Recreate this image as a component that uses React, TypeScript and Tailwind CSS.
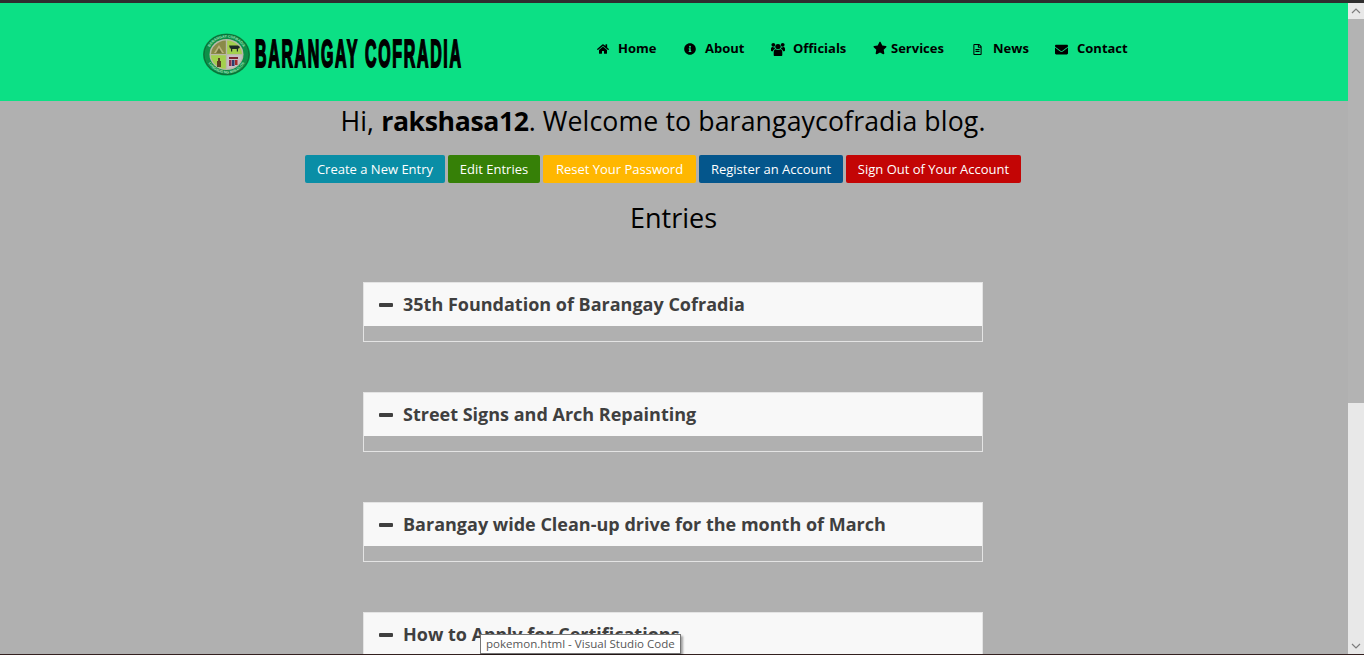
import React from "react";
import { FaHome, FaInfoCircle, FaStar, FaRegFileAlt, FaEnvelope } from "react-icons/fa";

function UsersIcon({ size }: { size: number }) {
  return (
    <svg width={size} height={size} viewBox="0 0 14 14" fill="currentColor" className="shrink-0">
      <circle cx="7" cy="4.6" r="2.7" />
      <circle cx="2.3" cy="2.8" r="1.9" />
      <circle cx="11.7" cy="2.8" r="1.9" />
      <path d="M3.6 14c-.5 0-.9-.4-.9-1V10c0-1.7 1-2.8 2-2.8.6.5 1.400.8 2.300.8s1.700-.3 2.300-.8c1 0 2 1.100 2 2.800v3c0 .6-.4 1-.9 1z" />
      <path d="M0 8.600V6.800C0 5.600.8 5 1.500 5c.4.300.9.500 1.500.500.300 0 .5 0 .7-.1-.1.500.1 1 .4 1.400C3 7.300 2.200 8 2 9.200H.8C.3 9.200 0 9 0 8.600z" />
      <path d="M14 8.600V6.800C14 5.600 13.200 5 12.500 5c-.4.300-.9.500-1.500.500-.3 0-.5 0-.7-.1.100.500-.1 1-.4 1.400 1.100.5 1.900 1.200 2.100 2.400h1.200c.5 0 .8-.2.800-.6z" />
    </svg>
  );
}

const nav = [
  { label: "Home", icon: <FaHome size={12} className="shrink-0" />, w: "w-[59.5px]", gap: "gap-[9px]" },
  { label: "About", icon: <FaInfoCircle size={12} className="shrink-0" />, w: "w-[59.5px]", gap: "gap-[9px]" },
  { label: "Officials", icon: <UsersIcon size={14} />, w: "w-[74.5px]", gap: "gap-[8px]" },
  { label: "Services", icon: <FaStar size={14} className="shrink-0 mb-[2px]" />, w: "w-[71.5px]", gap: "gap-[4px]" },
  { label: "News", icon: <FaRegFileAlt size={11} className="shrink-0" />, w: "w-[55.5px]", gap: "gap-[10px]" },
  { label: "Contact", icon: <FaEnvelope size={13} className="shrink-0" />, w: "w-[73px]", gap: "gap-[9px]" },
];

const buttons = [
  { label: "Create a New Entry", cls: "bg-[#0a8ea6] w-[140px]" },
  { label: "Edit Entries", cls: "bg-[#368007] w-[92px]" },
  { label: "Reset Your Password", cls: "bg-[#ffb700] w-[153px]" },
  { label: "Register an Account", cls: "bg-[#04568c] w-[144px]" },
  { label: "Sign Out of Your Account", cls: "bg-[#c30505] w-[175px]" },
];

const entries = [
  "35th Foundation of Barangay Cofradia",
  "Street Signs and Arch Repainting",
  "Barangay wide Clean-up drive for the month of March",
  "How to Apply for Certifications",
];

function Logo() {
  return (
    <svg width="47" height="43" viewBox="0 0 47 43" className="shrink-0">
      <defs>
        <path id="logo-top" d="M5 21.500A18.500 17 0 0 1 42 21.500" />
        <path id="logo-bot" d="M3.500 21.500A20 19 0 0 0 43.500 21.500" />
      </defs>
      <ellipse cx="23.500" cy="21.500" rx="23.500" ry="21" fill="#0d8f48" />
      <ellipse cx="23.500" cy="21.500" rx="22.500" ry="20" fill="none" stroke="#0a6b36" strokeWidth="1" />
      <text fontSize="3.600" fill="#9fe0b8" fontFamily="Liberation Sans, sans-serif" fontWeight="700">
        <textPath href="#logo-top" startOffset="50%" textAnchor="middle">BARANGAY COFRADIA</textPath>
      </text>
      <text fontSize="3.600" fill="#9fe0b8" fontFamily="Liberation Sans, sans-serif" fontWeight="700">
        <textPath href="#logo-bot" startOffset="50%" textAnchor="middle">LUNGSOD NG MALOLOS</textPath>
      </text>
      <ellipse cx="23.500" cy="21.500" rx="17" ry="15.500" fill="#b9b9a8" />
      <path d="M22.800 7.500A15.500 14 0 0 0 8 21H22.800Z" fill="#8a8a48" />
      <path d="M24.200 7.500A15.500 14 0 0 1 39 21H24.200Z" fill="#a3cf4d" />
      <path d="M22.800 22.200H8A15.500 14 0 0 0 22.800 35.800Z" fill="#a3cf4d" />
      <path d="M24.200 22.200H39A15.500 14 0 0 1 24.200 35.800Z" fill="#c8bfc4" />
      <path d="M11 20l5-8 5 8z" fill="#b9b27c" />
      <path d="M13 20l3-5 3 5z" fill="#6f7038" />
      <path d="M26 12.500h9l2 1.500-1 1.500h-1v3h-1.200v-2.500h-4.600v2.500H28v-3h-1z" fill="#1e2a26" />
      <path d="M15 25h2v3h1v6h-4v-6h1z" fill="#5a3d22" />
      <rect x="26" y="24" width="9" height="2" fill="#7a2230" />
      <rect x="26" y="27" width="2.500" height="6" fill="#8d2e4d" />
      <rect x="29" y="27" width="2.500" height="6" fill="#2b3f6f" />
      <rect x="32" y="27" width="2.500" height="5" fill="#a32b2b" />
    </svg>
  );
}

function Entry({ title }: { title: string }) {
  return (
    <div className="w-[620px] h-[60px] border border-[#e4e4e4] mb-[50px] shrink-0">
      <div className="h-[43px] bg-[#f8f8f8] flex items-center pl-[15px] text-[#3f3f3f] font-bold text-[18px]">
        <span className="w-[14px] h-[4px] rounded-[1px] bg-[#3f3f3f] mr-[10px] shrink-0" />
        <span>{title}</span>
      </div>
    </div>
  );
}

export default function App() {
  return (
    <div className="relative h-[655px] w-[1364px] overflow-hidden bg-[#b0b0b0] font-['Open_Sans',sans-serif] flex flex-col">
      <div className="h-[3px] bg-[#2e2e2e] shrink-0" />
      <div className="flex flex-1 min-h-0">
        <main className="w-[1348px] flex flex-col items-center overflow-hidden">
          <header className="w-full h-[98px] shrink-0 bg-[#0ce085] flex items-center pl-[203px] pt-[4px]">
            <Logo />
            <div className="w-[208px] ml-[5px] h-[44px] flex items-center">
              <span className="font-['Liberation_Sans',sans-serif] font-bold text-[38px] leading-none text-black whitespace-nowrap origin-left scale-x-[0.42] [-webkit-text-stroke:2px_black] tracking-[4px]">
                BARANGAY COFRADIA
              </span>
            </div>
            <nav className="flex ml-[134px] mt-[-10px] gap-[27.5px] text-[13px] font-bold text-black">
              {nav.map(({ label, icon, w, gap }) => (
                <a key={label} className={`flex items-center ${gap} ${w} whitespace-nowrap`}>
                  {icon}
                  <span>{label}</span>
                </a>
              ))}
            </nav>
          </header>
          <h1 className="mt-[1px] h-[38px] leading-[38px] text-[26.67px] tracking-[0.12px] text-black whitespace-nowrap ml-[-22px]">
            Hi, <b className="tracking-[-0.4px]">rakshasa12</b>. Welcome to barangaycofradia blog.
          </h1>
          <div className="flex gap-[3px] mt-[15px] ml-[-22px]">
            {buttons.map((b) => (
              <a key={b.label} className={`${b.cls} h-[28px] pt-[1px] rounded-[2px] flex items-center justify-center text-white text-[13px] whitespace-nowrap`}>
                {b.label}
              </a>
            ))}
          </div>
          <h2 className="mt-[16px] h-[38px] leading-[38px] text-[27px] font-medium text-black ml-[-1px]">Entries</h2>
          <div className="mt-[45px] flex flex-col items-center ml-[-2px]">
            {entries.map((t) => (
              <Entry key={t} title={t} />
            ))}
          </div>
        </main>
        <aside className="w-[16px] bg-[#e8e8e8] flex flex-col shrink-0">
          <div className="h-[16px] flex items-center justify-center shrink-0">
            <svg width="10" height="6" viewBox="0 0 10 6" fill="none" stroke="#7d7d7d" strokeWidth="1.2"><path d="M1 5l4-4 4 4" /></svg>
          </div>
          <div className="h-[384px] bg-[#b3b3b3] shrink-0" />
          <div className="flex-1" />
          <div className="h-[16px] flex items-center justify-center shrink-0">
            <svg width="10" height="6" viewBox="0 0 10 6" fill="none" stroke="#7d7d7d" strokeWidth="1.2"><path d="M1 1l4 4 4-4" /></svg>
          </div>
        </aside>
      </div>
      <div className="h-[1px] bg-[#33201f] shrink-0" />
      <div className="absolute left-[480px] top-[634px] h-[20px] w-[201px] bg-white border border-[#767676] shadow-[2px_2px_2px_rgba(0,0,0,0.35)] flex items-center pl-[5px] text-[11.55px] text-[#575757] whitespace-nowrap">
        pokemon.html - Visual Studio Code
      </div>
    </div>
  );
}
